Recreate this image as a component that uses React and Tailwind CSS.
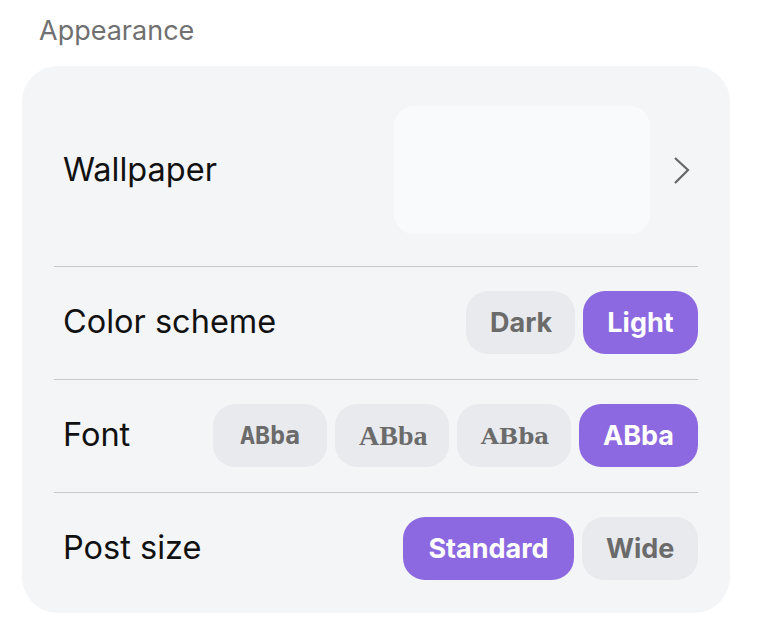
import React, { useState } from "react";

const FONTS = [
  { key: "rounded", family: "font-['DejaVu_Sans_Mono',monospace] text-[25px] font-bold" },
  { key: "serif", family: "font-['Liberation_Serif',serif] text-[28px] font-bold" },
  { key: "mono", family: "font-['DejaVu_Serif',serif] text-[23px] font-bold" },
  { key: "sans", family: "font-['Inter',sans-serif] text-[27px] font-bold" },
];

function Pill({ active, onClick, className = "", children }) {
  return (
    <button
      type="button"
      onClick={onClick}
      className={`h-[63px] px-6 rounded-[22px] leading-none ${
        active ? "bg-[#8c69e0] text-white" : "bg-[#e9eaee] text-[#6b6b6b]"
      } ${className}`}
    >
      {children}
    </button>
  );
}

function Row({ label, children, last }) {
  return (
    <div className={`flex items-center justify-between pt-6 pb-[25px] ${last ? "" : "border-b border-[#c9c9cc]"}`}>
      <span className="pl-[9px] text-[32.5px] text-[#111]">{label}</span>
      <div className="flex gap-2">{children}</div>
    </div>
  );
}

export default function App() {
  const [scheme, setScheme] = useState("light");
  const [font, setFont] = useState("sans");
  const [size, setSize] = useState("standard");

  return (
    <div className="min-h-screen bg-white pt-[13px] font-['Inter',sans-serif]">
      <h2 className="pl-[39px] text-[27px] leading-[36px] text-[#707070]">Appearance</h2>

      <div className="mt-[17px] ml-[22px] w-[708px] rounded-[36px] bg-[#f4f5f7] px-8 py-2">
        {/* Wallpaper */}
        <div className="flex items-center justify-between pt-8 pb-8 border-b border-[#c9c9cc]">
          <span className="pl-[9px] text-[32.5px] text-[#111]">Wallpaper</span>
          <div className="flex items-center">
            <div className="h-[128px] w-[256px] rounded-[20px] bg-[#f9fafc]" />
            <svg width="48" height="32" viewBox="0 0 48 32" className="text-[#666]">
              <path d="M25 4 L38 16 L25 29" fill="none" stroke="currentColor" strokeWidth="2.2" />
            </svg>
          </div>
        </div>

        <Row label="Color scheme">
          <Pill active={scheme === "dark"} onClick={() => setScheme("dark")} className="w-[109px] text-[27px] font-bold">
            Dark
          </Pill>
          <Pill active={scheme === "light"} onClick={() => setScheme("light")} className="w-[115px] text-[27px] font-bold">
            Light
          </Pill>
        </Row>

        <Row label="Font">
          {FONTS.map((f) => (
            <Pill
              key={f.key}
              active={font === f.key}
              onClick={() => setFont(f.key)}
              className={`${f.key === "sans" ? "w-[119px]" : "w-[114px]"} ${f.family}`}
            >
              ABba
            </Pill>
          ))}
        </Row>

        <Row label="Post size" last>
          <Pill active={size === "standard"} onClick={() => setSize("standard")} className="w-[171px] text-[27px] font-bold">
            Standard
          </Pill>
          <Pill active={size === "wide"} onClick={() => setSize("wide")} className="w-[116px] text-[27px] font-bold">
            Wide
          </Pill>
        </Row>
      </div>
    </div>
  );
}
